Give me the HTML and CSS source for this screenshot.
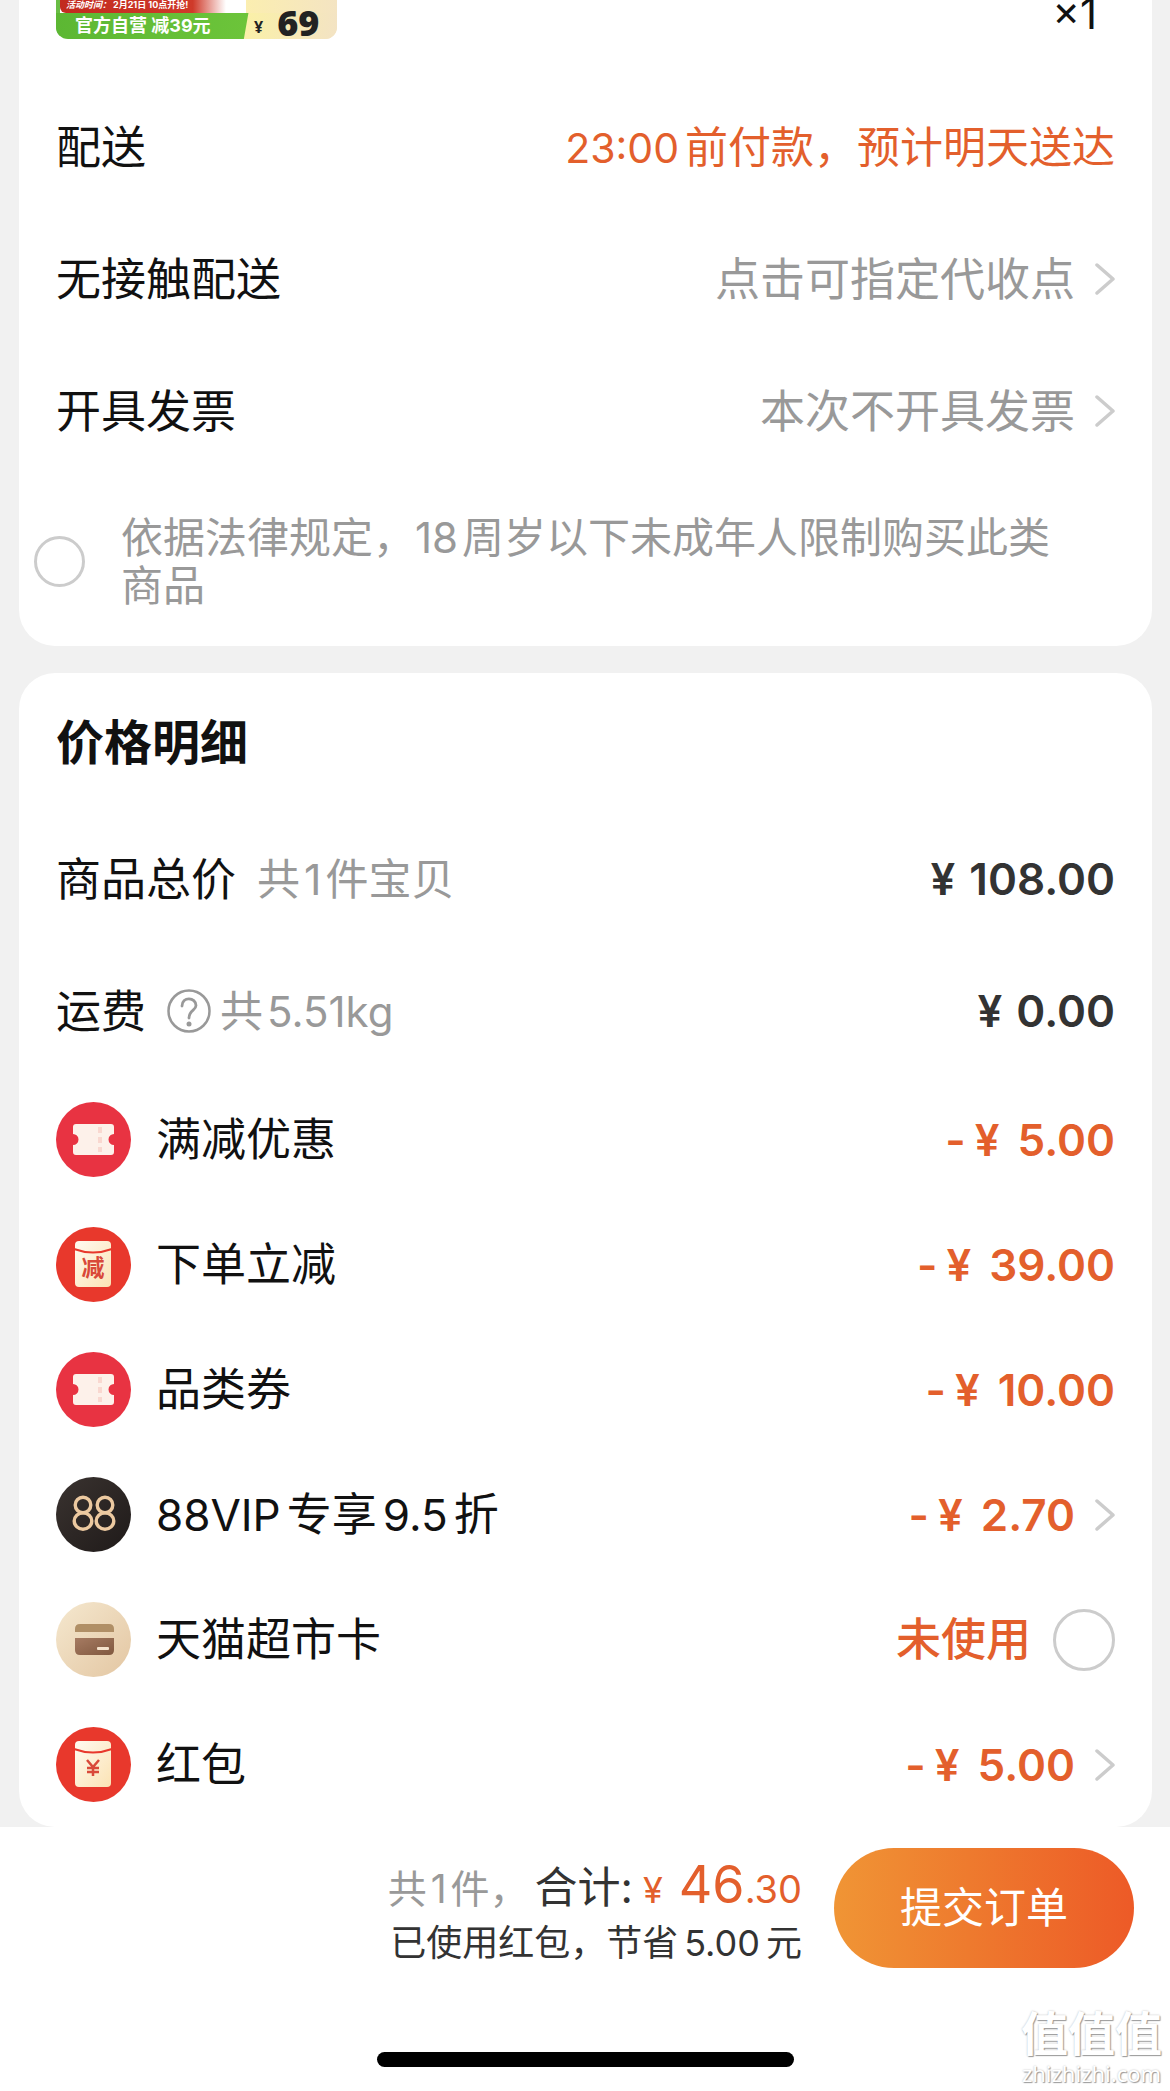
FILE: index.html
```html
<!DOCTYPE html>
<html lang="zh-CN">
<head>
<meta charset="utf-8">
<meta name="viewport" content="width=device-width, initial-scale=1">
<title>确认订单</title>
<link rel="stylesheet" href="styles.css">
</head>
<body>
<svg class="sprite" aria-hidden="true">
  <defs>
    <linearGradient id="cream" x1="0" y1="0" x2="1" y2="1">
      <stop offset="0" stop-color="#fffaf0"/><stop offset="1" stop-color="#fbe3b4"/>
    </linearGradient>
    <linearGradient id="sand" x1="0" y1="0" x2="1" y2="1">
      <stop offset="0" stop-color="#f5e8cf"/><stop offset="1" stop-color="#e3c6a2"/>
    </linearGradient>
    <linearGradient id="night" x1="0" y1="0" x2="1" y2="1">
      <stop offset="0" stop-color="#3a3330"/><stop offset="1" stop-color="#1f1a19"/>
    </linearGradient>
    <linearGradient id="brown" x1="0" y1="0" x2="1" y2="1">
      <stop offset="0" stop-color="#a67b62"/><stop offset="1" stop-color="#80583f"/>
    </linearGradient>
    <symbol id="chevron" viewBox="0 0 20 32">
      <path d="M2 2 L18 16 L2 30" fill="none" stroke="#ccc" stroke-width="3.5" stroke-linecap="round" stroke-linejoin="round"/>
    </symbol>
    <symbol id="coupon" viewBox="0 0 75 75">
      <circle cx="37.5" cy="37.5" r="37.5" fill="#e83342"/>
      <path d="M20 22 H55 Q58 22 58 25 V32 A5.500 5.500 0 0 0 58 43 V50 Q58 53 55 53 H20 Q17 53 17 50 V43 A5.500 5.500 0 0 0 17 32 V25 Q17 22 20 22 Z" fill="#fdf1ea"/>
      <path d="M44 25 V50" stroke="#f9d8d0" stroke-width="4" stroke-dasharray="6 4"/>
    </symbol>
    <symbol id="packet" viewBox="0 0 75 75">
      <circle cx="37.5" cy="37.5" r="37.5" fill="#e8382c"/>
      <rect x="19" y="14" width="36" height="46" rx="4" fill="url(#cream)"/>
      <path d="M18 22 Q37 29 56 22" fill="none" stroke="#e8382c" stroke-width="2"/>
    </symbol>
  </defs>
</svg>

<main class="page">
  <section class="card">
    <div class="product">
      <div class="thumb">
        <div class="thumb-time"><em>活动时间：</em><span>2月21日 10点开抢!</span></div>
        <div class="thumb-strip">
          <span class="thumb-promo">官方自营 减39元</span>
          <span class="thumb-price"><small>¥</small><b>69</b></span>
        </div>
      </div>
      <span class="quantity">×1</span>
    </div>
    <div class="row">
      <span>配送</span>
      <span class="eta"><span class="time">23:00</span>前付款，预计明天送达</span>
    </div>
    <a class="row" href="#pickup">
      <span>无接触配送</span>
      <span class="option">点击可指定代收点<svg class="chevron"><use href="#chevron"/></svg></span>
    </a>
    <a class="row" href="#invoice">
      <span>开具发票</span>
      <span class="option">本次不开具发票<svg class="chevron"><use href="#chevron"/></svg></span>
    </a>
    <label class="consent">
      <input class="tick" type="checkbox">
      <span>依据法律规定，<span class="before">18</span>周岁以下未成年人限制购买此类商品</span>
    </label>
  </section>

  <section class="card card-last">
    <h1 class="title">价格明细</h1>
    <div class="row">
      <span class="label">商品总价 <span class="note">共<span class="num">1</span>件宝贝</span></span>
      <span class="price"><i>¥</i>108.00</span>
    </div>
    <div class="row">
      <span class="label">运费
        <span class="note weight">
          <button class="help" type="button" aria-label="运费说明">
            <svg viewBox="0 0 44 44"><circle cx="22" cy="22" r="20.5" fill="none" stroke="#999" stroke-width="2.5"/><path d="M15 17 C15 7 29 8 29 16.500 C29 21.500 22 21 22 29" fill="none" stroke="#999" stroke-width="2.800" stroke-linecap="round"/><circle cx="22" cy="35" r="2.500" fill="#999"/></svg>
          </button>
          <span>共<span class="num">5.51kg</span></span>
        </span>
      </span>
      <span class="price"><i>¥</i>0.00</span>
    </div>
    <div class="row deal">
      <span class="deal-name"><svg class="badge"><use href="#coupon"/></svg>满减优惠</span>
      <span class="price off"><i>-</i><i>¥</i>5.00</span>
    </div>
    <div class="row deal">
      <span class="deal-name"><svg class="badge" viewBox="0 0 75 75"><use href="#packet"/><text class="packet-text" x="37" y="49">减</text></svg>下单立减</span>
      <span class="price off"><i>-</i><i>¥</i>39.00</span>
    </div>
    <div class="row deal">
      <span class="deal-name"><svg class="badge"><use href="#coupon"/></svg>品类券</span>
      <span class="price off"><i>-</i><i>¥</i>10.00</span>
    </div>
    <a class="row deal" href="#vip">
      <span class="deal-name"><svg class="badge" viewBox="0 0 75 75"><circle cx="37.5" cy="37.5" r="37.5" fill="url(#night)"/><g fill="none" stroke="#ecc9a0" stroke-width="3.400"><ellipse cx="27" cy="28" rx="7.800" ry="7.800"/><ellipse cx="27" cy="44" rx="8.800" ry="8.200"/><ellipse cx="49" cy="28" rx="7.800" ry="7.800"/><ellipse cx="49" cy="44" rx="8.800" ry="8.200"/></g></svg><span class="vip">88VIP<span class="word">专享</span>9.5<span class="word">折</span></span></span>
      <span class="price off"><i>-</i><i>¥</i>2.70<svg class="chevron"><use href="#chevron"/></svg></span>
    </a>
    <label class="row deal">
      <span class="deal-name"><svg class="badge" viewBox="0 0 75 75"><circle cx="37.5" cy="37.5" r="37.5" fill="url(#sand)"/><path d="M19 30 V27 Q19 22 24 22 H53 Q58 22 58 27 V30 Z" fill="#b08f66"/><path d="M19 36 H58 V48 Q58 53 53 53 H24 Q19 53 19 48 Z" fill="url(#brown)"/><rect x="41" y="45" width="12" height="3" rx="1" fill="#f5e3cc"/></svg>天猫超市卡</span>
      <span class="unused">未使用<input class="tick tick-large" type="checkbox"></span>
    </label>
    <a class="row deal" href="#packet-list">
      <span class="deal-name"><svg class="badge" viewBox="0 0 75 75"><use href="#packet"/><path d="M31 33 L37 40 L43 33 M37 40 V49 M31 41 H43 M31 45 H43" fill="none" stroke="#d9493a" stroke-width="2.500"/></svg>红包</span>
      <span class="price off"><i>-</i><i>¥</i>5.00<svg class="chevron"><use href="#chevron"/></svg></span>
    </a>
  </section>
</main>

<footer class="bar">
  <div class="checkout">
    <div class="summary">
      <p class="total"><span class="count">共<span class="num">1</span>件，</span><span class="sum">合计:</span><span class="amount"><i>¥</i><b>46</b>.30</span></p>
      <p class="saved">已使用红包，节省<span class="num">5.00</span>元</p>
    </div>
    <button class="submit" type="button">提交订单</button>
  </div>
  <div class="home-indicator"></div>
  <div class="watermark"><strong>值值值</strong><span>zhizhizhi.com</span></div>
</footer>
</body>
</html>
```
FILE: styles.css
```css
* { box-sizing: border-box; }

body {
  margin: 0;
  min-height: 100vh;
  display: flex;
  flex-direction: column;
  background: #f1f1f1;
  color: #111;
  font-family: Inter, "Noto Sans CJK SC", sans-serif;
  font-size: 45px;
  line-height: 1;
}

a { color: inherit; text-decoration: none; }
i { font-style: normal; }
p, h1 { margin: 0; }
.sprite { position: absolute; width: 0; height: 0; }

.page {
  display: flex;
  flex-direction: column;
  gap: 27px;
  padding: 0 18px 0 19px;
}

.card {
  padding: 0 37px;
  background: #fff;
  border-radius: 0 0 36px 36px;
}
.card-last { border-radius: 36px; }

.row {
  display: flex;
  align-items: center;
  justify-content: space-between;
  height: 132px;
}
.deal { height: 125px; }

/* product line */
.product {
  display: flex;
  align-items: flex-start;
  justify-content: space-between;
  height: 81px;
}
.thumb {
  width: 281px;
  height: 39px;
  overflow: hidden;
  border-radius: 0 0 12px 12px;
  background: linear-gradient(90deg, #69bd45 4px, #fff 4px, #fff 190px, #fbeeb0 190px, #f4e4c2);
  color: #fff;
  font-weight: 700;
}
.thumb-time {
  display: flex;
  align-items: center;
  gap: 2px;
  width: 166px;
  height: 13px;
  padding: 0 0 4px 6px;
  margin-left: 4px;
  border-radius: 0 0 0 6px;
  background: linear-gradient(90deg, #c22a1f, #cf3a2a 80%, #fff);
  font-size: 9px;
  white-space: nowrap;
}
.thumb-strip {
  display: flex;
  height: 26px;
  background: linear-gradient(100deg, #5cb733, #6cc43a 189px, #faf0a8 190px, #f3e3c4);
}
.thumb-promo {
  width: 189px;
  padding-left: 19px;
  font-size: 18px;
  line-height: 26px;
  white-space: nowrap;
}
.thumb-price {
  display: flex;
  align-items: flex-end;
  gap: 14px;
  padding-left: 9px;
  color: #222;
  font-family: "Noto Sans", "Noto Sans CJK SC", sans-serif;
}
.thumb-price small { font-size: 16px; line-height: 24px; }
.thumb-price b { font-size: 36px; line-height: 32px; }
.quantity {
  margin-right: 18px;
  font-size: 42px;
  line-height: 28px;
}

/* delivery options */
.eta { color: #e35f2c; font-size: 43px; }
.time { margin-right: 6px; font-size: 41px; }
.option {
  display: flex;
  align-items: center;
  color: #999;
}
.chevron {
  width: 20px;
  height: 32px;
  margin-left: 20px;
}
.consent {
  display: flex;
  align-items: center;
  gap: 36px;
  height: 169px;
  margin-left: -22px;
  padding-right: 60px;
  color: #999;
  font-size: 42px;
  line-height: 48px;
}
.tick {
  flex: none;
  appearance: none;
  width: 51px;
  height: 51px;
  margin: 0;
  border: 3px solid #ccc;
  border-radius: 50%;
  background: #fff;
}
.tick-large { width: 62px; height: 62px; }
.num { margin: 0 4px; }
.before { margin-right: 4px; }

/* price list */
.title {
  font-size: 48px;
  font-weight: 700;
  line-height: 140px;
}
.label {
  display: flex;
  align-items: center;
  gap: 21px;
}
.note { color: #999; font-size: 43px; }
.weight {
  display: flex;
  align-items: center;
  gap: 9px;
}
.weight .num { font-size: 42px; }
.help {
  width: 44px;
  height: 44px;
  padding: 0;
  border: 0;
  background: none;
}
.help svg { display: block; }
.price {
  display: flex;
  align-items: center;
  color: #333;
  font-size: 44px;
  font-weight: 600;
}
.price i { margin-right: 14px; }
.off, .unused { color: #e35f2c; }
.off i + i { margin-right: 18px; }
.off i:first-child { margin-right: 9px; }
.deal-name {
  display: flex;
  align-items: center;
  gap: 25px;
}
.badge { width: 75px; height: 75px; }
.vip { font-size: 44px; }
.word { margin: 0 6px; font-size: 45px; }
.packet-text {
  fill: #d9493a;
  font-size: 23px;
  font-weight: 700;
  text-anchor: middle;
}
.unused {
  display: flex;
  align-items: center;
  gap: 22px;
  font-weight: 500;
}

/* checkout bar */
.bar {
  position: relative;
  flex: 1;
  min-height: 264px;
  background: #fff;
}
.checkout {
  display: flex;
  align-items: center;
  justify-content: flex-end;
  gap: 32px;
  height: 120px;
  margin: 21px 36px 0;
}
.summary {
  padding-top: 8px;
  color: #333;
  text-align: right;
}
.total {
  display: flex;
  align-items: baseline;
  line-height: 56px;
}
.count { color: #999; font-size: 39px; }
.sum { margin-left: 6px; font-size: 43px; }
.amount { color: #e35f2c; font-size: 38px; }
.amount i { margin: 0 16px 0 10px; font-size: 36px; }
.amount b { font-size: 52px; font-weight: 400; }
.saved { font-size: 36px; line-height: 50px; }
.saved .num { margin: 0 6px; }
.submit {
  width: 300px;
  height: 120px;
  padding: 0;
  border: 0;
  border-radius: 60px;
  background: linear-gradient(90deg, #f09535, #ee7a2e 45%, #ed5a27);
  color: #fff;
  font: inherit;
  font-size: 42px;
}
.home-indicator {
  width: 417px;
  height: 15px;
  margin: 84px auto 0;
  border-radius: 8px;
  background: #000;
}
.watermark {
  position: absolute;
  right: 8px;
  bottom: 4px;
  display: flex;
  flex-direction: column;
  align-items: center;
  color: #fff;
  text-shadow: 1px 1px 1px #999, 0 0 2px #bbb;
}
.watermark strong { font-size: 47px; line-height: 50px; }
.watermark span { font-family: "Noto Sans", sans-serif; font-size: 22px; line-height: 28px; }
```
